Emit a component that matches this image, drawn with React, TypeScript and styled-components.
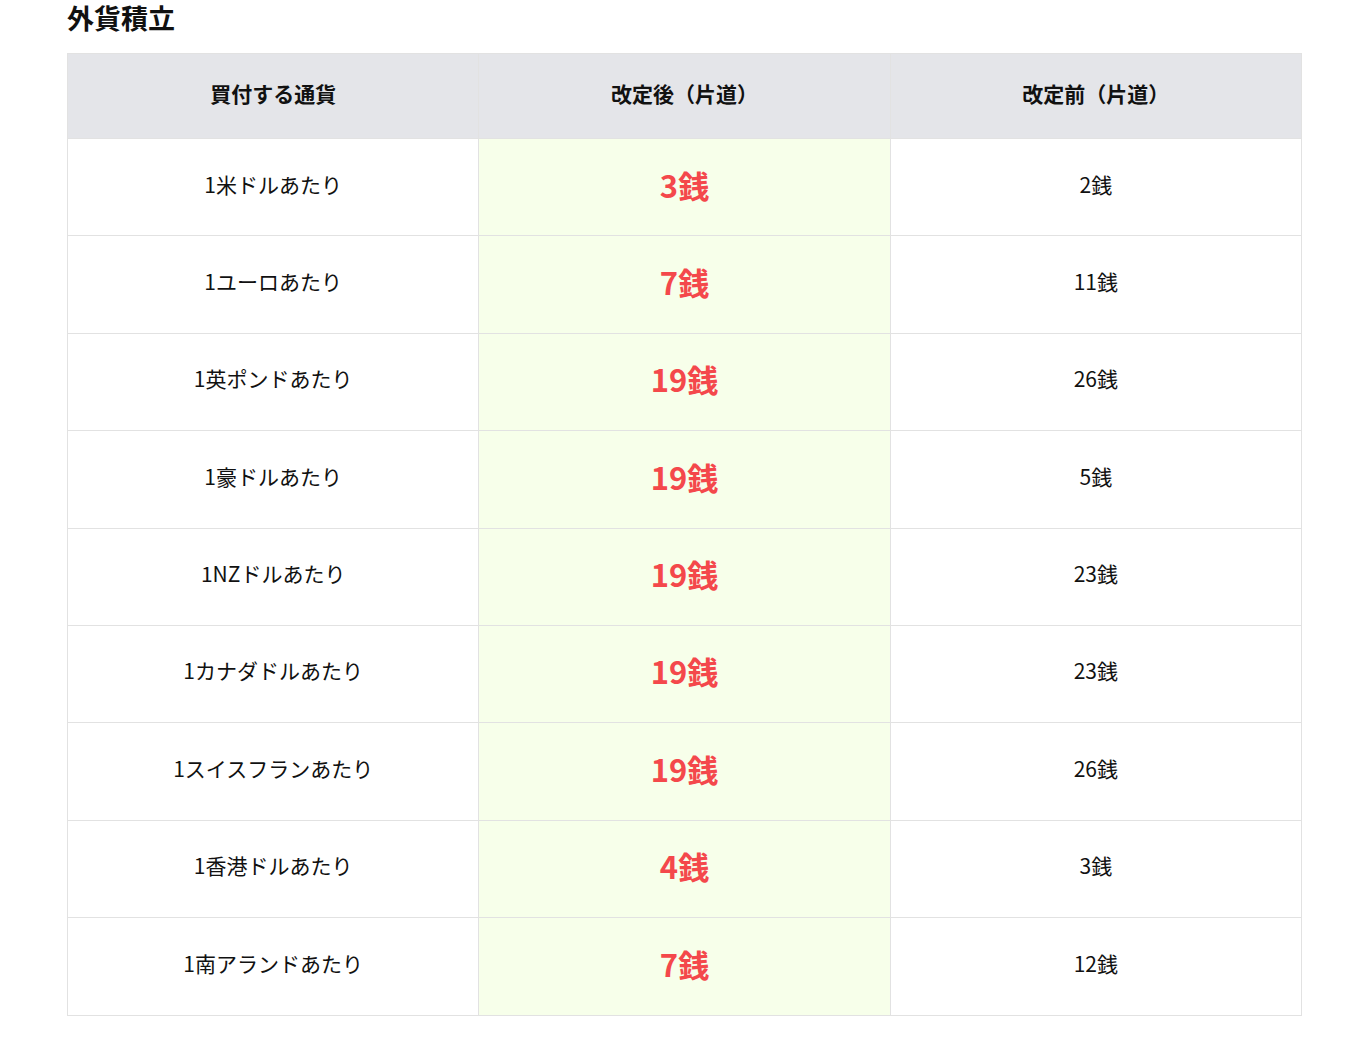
import React from 'react'
import styled, { createGlobalStyle } from 'styled-components'

const GlobalStyle = createGlobalStyle`
  html, body {
    margin: 0;
    padding: 0;
    background: #ffffff;
  }
  body {
    font-family: "Noto Sans CJK JP", "Noto Sans", sans-serif;
    color: #111111;
  }
`

const Page = styled.div`
  padding: 0 64px 0 67px;
`

const Title = styled.h2`
  margin: 0 0 17px;
  font-size: 27px;
  line-height: 36px;
  font-weight: 700;
  color: #111111;
`

const Table = styled.table`
  width: 100%;
  border-collapse: collapse;
  border: 1px solid #e2e2e2;
  table-layout: fixed;
`

const HeadCell = styled.th`
  box-sizing: border-box;
  height: 85px;
  padding: 0 0 6px;
  background: #e4e5e9;
  border: 1px solid #e2e2e2;
  border-top: none;
  font-size: 21px;
  font-weight: 700;
  text-align: center;
  vertical-align: middle;
`

const Cell = styled.td<{ $highlight?: boolean }>`
  box-sizing: border-box;
  height: 97.4px;
  padding: 0 0 6px;
  border: 1px solid #e2e2e2;
  background: ${(p) => (p.$highlight ? '#f7ffea' : '#ffffff')};
  font-size: 21px;
  line-height: 1.4;
  text-align: center;
  vertical-align: middle;
`

const NewFee = styled.span`
  color: #f4484b;
  font-size: 31px;
  font-weight: 700;
`

const rows = [
  ['1米ドルあたり', '3銭', '2銭'],
  ['1ユーロあたり', '7銭', '11銭'],
  ['1英ポンドあたり', '19銭', '26銭'],
  ['1豪ドルあたり', '19銭', '5銭'],
  ['1NZドルあたり', '19銭', '23銭'],
  ['1カナダドルあたり', '19銭', '23銭'],
  ['1スイスフランあたり', '19銭', '26銭'],
  ['1香港ドルあたり', '4銭', '3銭'],
  ['1南アランドあたり', '7銭', '12銭'],
]

const App = () => (
  <React.Fragment>
    <GlobalStyle />
    <Page>
      <Title>外貨積立</Title>
      <Table>
        <thead>
          <tr>
            <HeadCell>買付する通貨</HeadCell>
            <HeadCell>改定後（片道）</HeadCell>
            <HeadCell>改定前（片道）</HeadCell>
          </tr>
        </thead>
        <tbody>
          {rows.map(([currency, after, before]) => (
            <tr key={currency}>
              <Cell>{currency}</Cell>
              <Cell $highlight>
                <NewFee>{after}</NewFee>
              </Cell>
              <Cell>{before}</Cell>
            </tr>
          ))}
        </tbody>
      </Table>
    </Page>
  </React.Fragment>
)

export default App
